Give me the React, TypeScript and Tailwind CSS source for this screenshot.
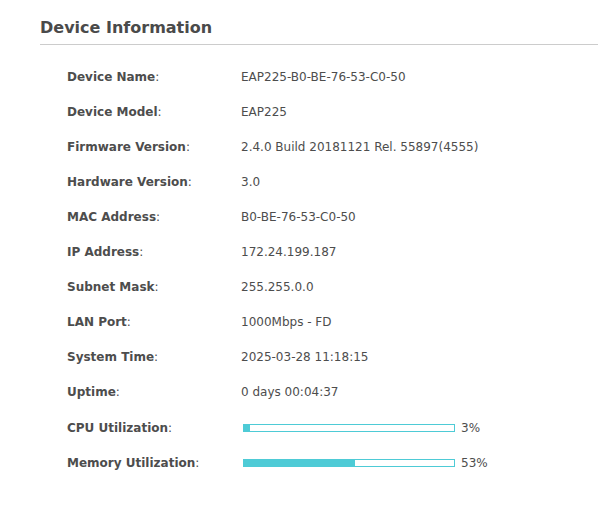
const rows: [string, string][] = [
  ["Device Name", "EAP225-B0-BE-76-53-C0-50"],
  ["Device Model", "EAP225"],
  ["Firmware Version", "2.4.0 Build 20181121 Rel. 55897(4555)"],
  ["Hardware Version", "3.0"],
  ["MAC Address", "B0-BE-76-53-C0-50"],
  ["IP Address", "172.24.199.187"],
  ["Subnet Mask", "255.255.0.0"],
  ["LAN Port", "1000Mbps - FD"],
  ["System Time", "2025-03-28 11:18:15"],
  ["Uptime", "0 days 00:04:37"],
];

const bars: [string, number][] = [
  ["CPU Utilization", 3],
  ["Memory Utilization", 53],
];

const Label = ({ text }: { text: string }) => (
  <div className="w-[174px] shrink-0">
    <span className="font-bold">{text}</span>:
  </div>
);

export default function App() {
  return (
    <div className="min-h-[530px] bg-white pl-[40px] pt-[18px] text-[12px] text-[#4d4d4d] [font-family:'DejaVu_Sans',Verdana,sans-serif]">
      <h2 className="text-[16px] font-bold leading-[20px] text-[#4a4a4a]">Device Information</h2>
      <div className="mt-[6px] h-px bg-[#cccccc]" />
      <div className="pl-[27px] pt-[14px]">
        {rows.map(([label, value]) => (
          <div key={label} className="flex h-[35px] items-center">
            <Label text={label} />
            <div>{value}</div>
          </div>
        ))}
        <div className="pt-px">
          {bars.map(([label, pct]) => (
            <div key={label} className="flex h-[35px] items-center">
              <Label text={label} />
              <div className="ml-[2px] h-[8px] w-[212px] border border-[#4ecbd6] bg-white">
                <div className="h-full bg-[#4ecbd6]" style={{ width: `${pct}%` }} />
              </div>
              <div className="ml-[6px]">{pct}%</div>
            </div>
          ))}
        </div>
      </div>
    </div>
  );
}
